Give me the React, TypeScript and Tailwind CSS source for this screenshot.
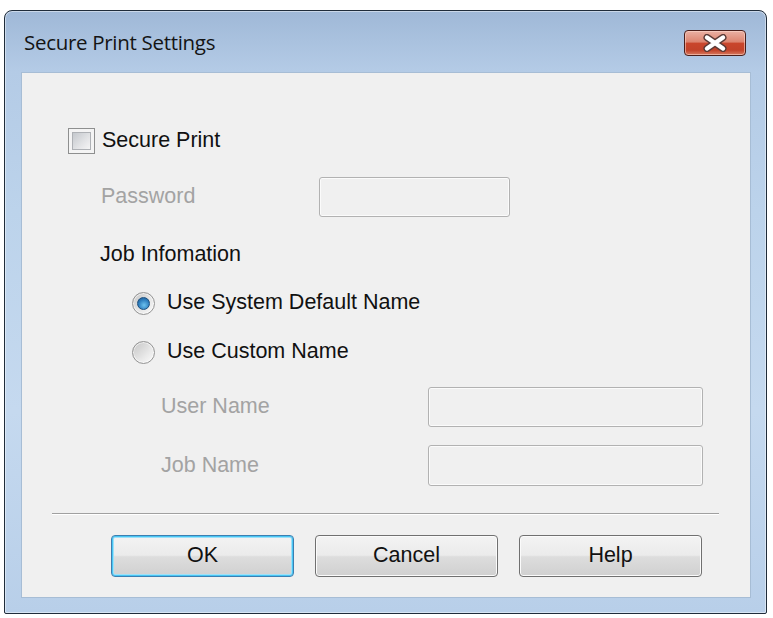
import React from "react";

const body = "font-['Liberation_Sans',Arial,sans-serif] text-[21.5px] leading-none";

function Checkbox() {
  return (
    <div className="w-[27px] h-[26px] border border-[#8e8f8f] bg-[#f4f4f4] p-[3px] shrink-0">
      <div className="w-full h-full border border-[#aeb1b5] bg-[linear-gradient(135deg,#c4c8cd,#e3e4e6_60%,#f5f5f5)]" />
    </div>
  );
}

function Radio({ checked }: { checked?: boolean }) {
  return (
    <div className="w-[23px] h-[23px] rounded-full border border-[#949494] bg-[linear-gradient(135deg,#c4c4c4,#e6e6e6_55%,#fafafa)] flex items-center justify-center shrink-0 shadow-[inset_0_0_0_1px_rgba(255,255,255,0.6)]">
      {checked ? (
        <div className="w-[13px] h-[13px] rounded-full border border-[#1b4f7e] bg-[radial-gradient(circle_at_55%_65%,#6cc2ef,#2f80c0_55%,#174f84)]" />
      ) : (
        <div className="w-[13px] h-[13px] rounded-full bg-[linear-gradient(135deg,#cfcfcf,#f3f3f3)]" />
      )}
    </div>
  );
}

function TextBox({ w, h }: { w: string; h: string }) {
  return (
    <div
      className={`${w} ${h} rounded-[3px] border border-[#b2b2b2] bg-[#f0f0f0] shadow-[inset_0_0_0_1px_#fbfbfb] shrink-0`}
    />
  );
}

function Button({ label, def }: { label: string; def?: boolean }) {
  return (
    <div
      className={`w-[183px] h-[42px] rounded-[4px] border flex items-center justify-center ${body} text-[#111] bg-[linear-gradient(to_bottom,#f3f3f3,#ebebeb_48%,#dddddd_52%,#d0d0d0)] ${
        def
          ? "border-[#3c7fb1] shadow-[inset_0_0_0_1px_#48c6f4,inset_0_0_0_2px_#9fe0f8]"
          : "border-[#707070] shadow-[inset_0_0_0_1px_#fbfbfb]"
      }`}
    >
      {label}
    </div>
  );
}

export default function App() {
  return (
    <div className="w-[773px] h-[618px] bg-white pt-[10px] pl-[4px]">
      <div className="w-[763px] h-[604px] rounded-t-[8px] rounded-b-[2px] border border-[#1f2c3a] bg-[linear-gradient(to_bottom,#9fb8d7,#b4cbe6_60px,#bcd3eb_200px,#c5d9ef_400px,#b8cfe9)] shadow-[inset_0_0_0_1px_rgba(255,255,255,0.45)] flex flex-col">
        {/* Title bar */}
        <div className="h-[61px] flex items-center justify-between pl-[19px] pr-[20px] pt-[2px]">
          <span className="font-['Open_Sans',sans-serif] text-[20.5px] text-[#141414] tracking-[-0.3px]">
            Secure Print Settings
          </span>
          <div className="w-[62px] h-[26px] rounded-[4px] border border-[#4a1f1b] bg-[linear-gradient(to_bottom,#eab1a4,#dd8570_45%,#c9462c_52%,#c2432a_80%,#d77a60)] shadow-[inset_0_0_0_1px_rgba(255,220,210,0.55)] flex items-center justify-center">
            <svg width="26" height="18" viewBox="0 0 26 18">
              <path d="M5 3.5 L21 14.5 M21 3.5 L5 14.5" stroke="#5a3a36" strokeWidth="7" strokeLinecap="round" />
              <path d="M5 3.5 L21 14.5 M21 3.5 L5 14.5" stroke="#ffffff" strokeWidth="4.4" strokeLinecap="round" />
            </svg>
          </div>
        </div>

        {/* Client area */}
        <div className="ml-[16px] w-[730px] h-[526px] bg-[#f0f0f0] border border-[#a7bdd5] flex flex-col">
          {/* Secure Print */}
          <div className="mt-[55px] ml-[46px] h-[26px] flex items-center gap-[7px]">
            <Checkbox />
            <span className={`${body} text-[#111]`}>Secure Print</span>
          </div>

          {/* Password */}
          <div className="mt-[23px] ml-[79px] h-[40px] flex items-center">
            <span className={`${body} text-[#a3a3a3] w-[218px]`}>Password</span>
            <TextBox w="w-[191px]" h="h-[40px]" />
          </div>

          {/* Job Infomation */}
          <div className="mt-[25px] ml-[78px] h-[26px] flex items-center">
            <span className={`${body} text-[#111]`}>Job Infomation</span>
          </div>

          {/* Radio 1 */}
          <div className="mt-[22px] ml-[110px] h-[26px] flex items-center gap-[12px]">
            <Radio checked />
            <span className={`${body} text-[#111]`}>Use System Default Name</span>
          </div>

          {/* Radio 2 */}
          <div className="mt-[23px] ml-[110px] h-[26px] flex items-center gap-[12px]">
            <Radio />
            <span className={`${body} text-[#111]`}>Use Custom Name</span>
          </div>

          {/* User Name */}
          <div className="mt-[22px] ml-[139px] h-[40px] flex items-center">
            <span className={`${body} text-[#a3a3a3] w-[267px]`}>User Name</span>
            <TextBox w="w-[275px]" h="h-[40px]" />
          </div>

          {/* Job Name */}
          <div className="mt-[18px] ml-[139px] h-[41px] flex items-center">
            <span className={`${body} text-[#a3a3a3] w-[267px]`}>Job Name</span>
            <TextBox w="w-[275px]" h="h-[41px]" />
          </div>

          {/* Separator */}
          <div className="mt-[27px] ml-[30px] w-[667px] h-[2px] border-t border-[#a0a0a0] border-b border-b-white" />

          {/* Buttons */}
          <div className="mt-[20px] ml-[89px] flex gap-[21px]">
            <Button label="OK" def />
            <Button label="Cancel" />
            <Button label="Help" />
          </div>
        </div>
      </div>
    </div>
  );
}
